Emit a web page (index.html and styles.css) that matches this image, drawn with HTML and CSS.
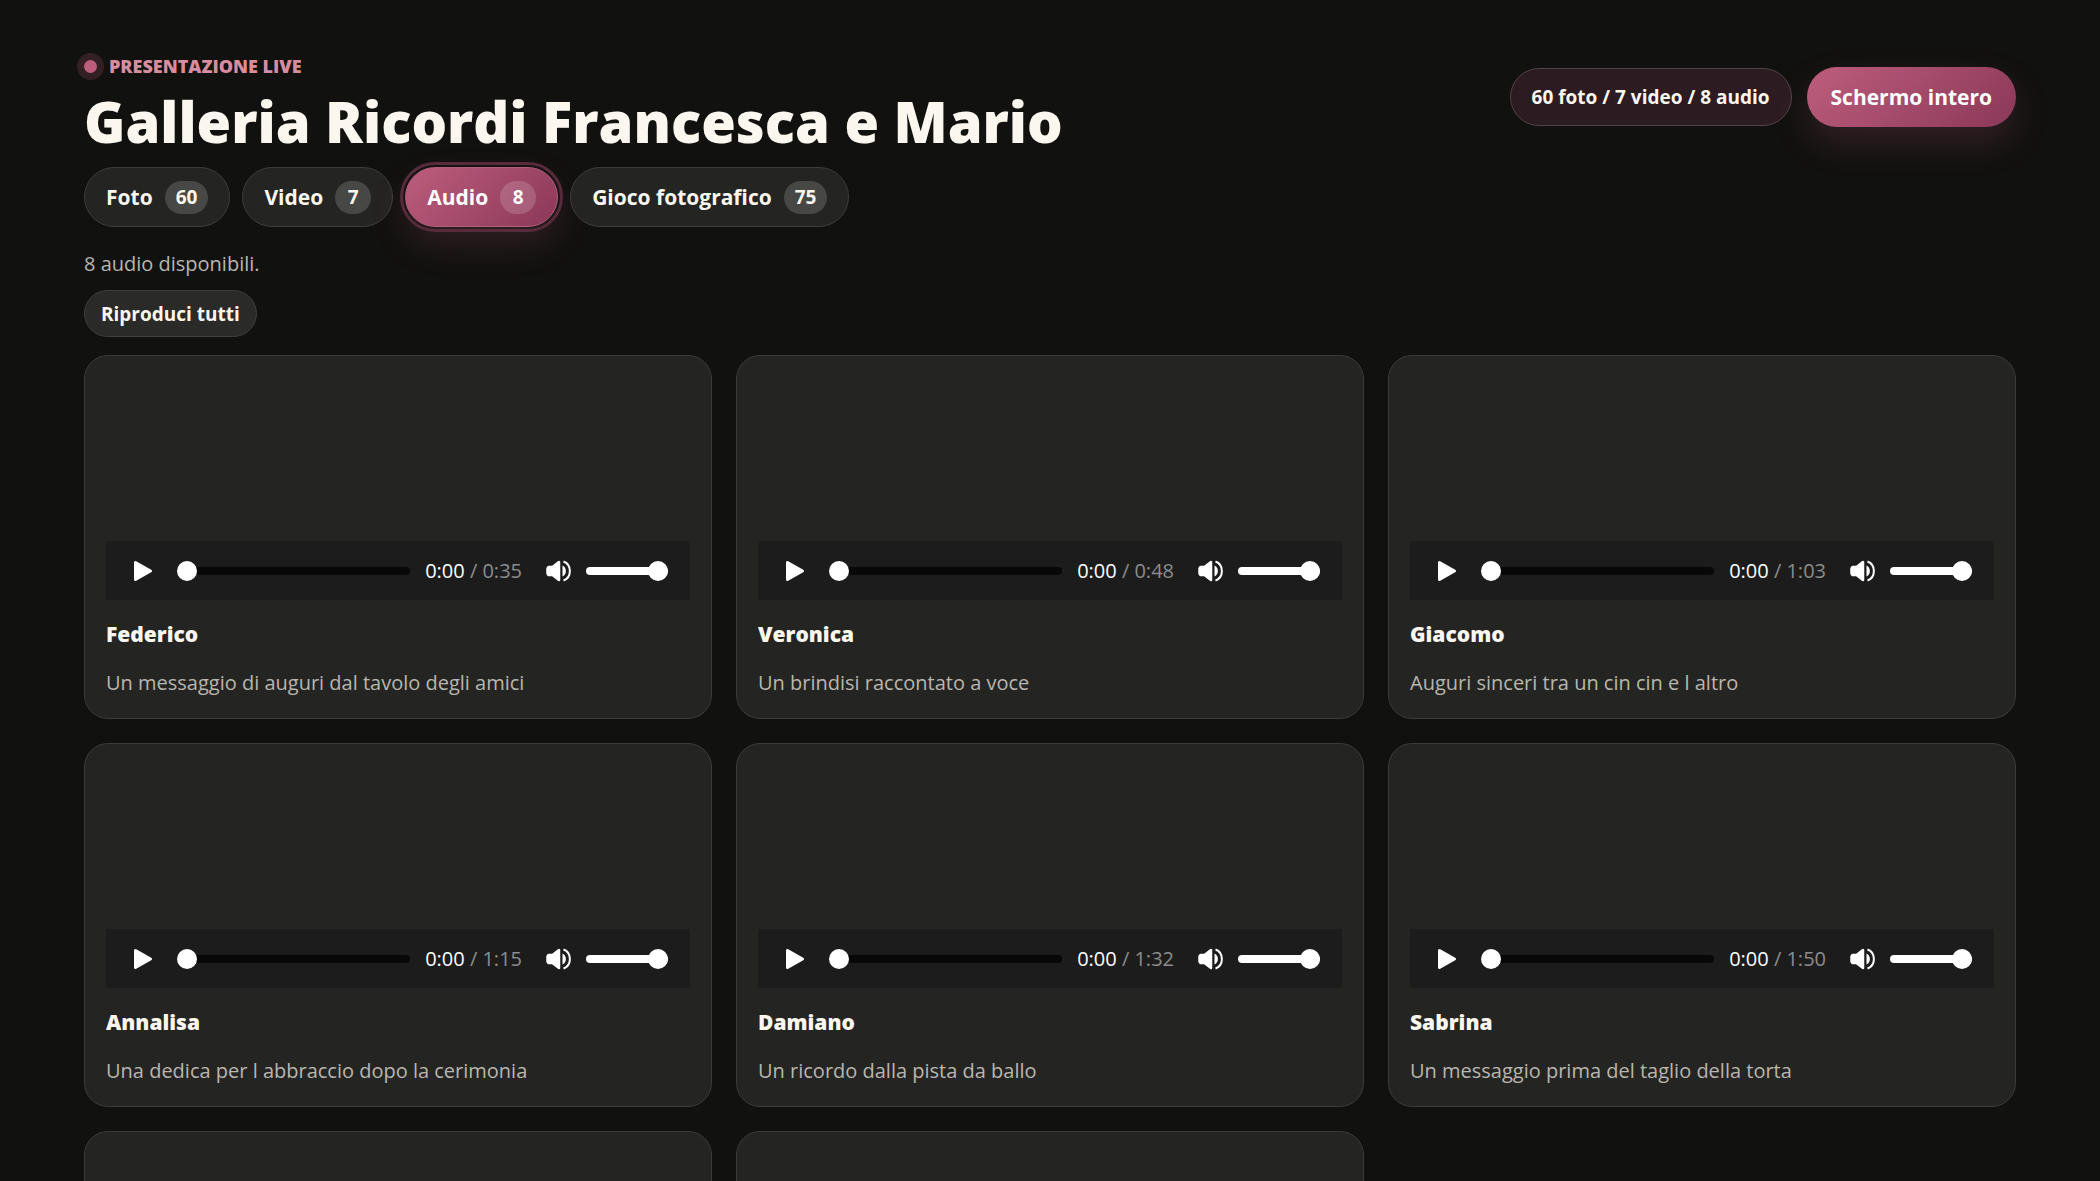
FILE: index.html
```html
<!DOCTYPE html>
<html lang="it">
<head>
    <meta charset="UTF-8">
    <meta name="viewport" content="width=device-width, initial-scale=1.0">
    <title>Galleria Ricordi Francesca e Mario</title>
    <link rel="stylesheet" href="styles.css">
</head>
<body>
    <main class="page">
        <header class="header">
            <div class="heading">
                <p class="eyebrow"><span class="live-dot"></span>Presentazione live</p>
                <h1>Galleria Ricordi Francesca e Mario</h1>
            </div>
            <div class="header-actions">
                <span class="summary">60 foto / 7 video / 8 audio</span>
                <button class="btn-fullscreen" type="button">Schermo intero</button>
            </div>
        </header>

        <nav class="tabs">
            <button class="tab" type="button">Foto <span class="count">60</span></button>
            <button class="tab" type="button">Video <span class="count">7</span></button>
            <button class="tab active" type="button">Audio <span class="count">8</span></button>
            <button class="tab" type="button">Gioco fotografico <span class="count">75</span></button>
        </nav>

        <p class="status">8 audio disponibili.</p>
        <button class="btn-play-all" type="button">Riproduci tutti</button>

        <section class="grid" id="grid"></section>
    </main>

    <script>
        const tracks = [
            { name: "Federico", time: "0:35", text: "Un messaggio di auguri dal tavolo degli amici" },
            { name: "Veronica", time: "0:48", text: "Un brindisi raccontato a voce" },
            { name: "Giacomo", time: "1:03", text: "Auguri sinceri tra un cin cin e l altro" },
            { name: "Annalisa", time: "1:15", text: "Una dedica per l abbraccio dopo la cerimonia" },
            { name: "Damiano", time: "1:32", text: "Un ricordo dalla pista da ballo" },
            { name: "Sabrina", time: "1:50", text: "Un messaggio prima del taglio della torta" }
        ];
        const total = 8;

        const player = track => `
            <div class="player">
                <button class="icon-btn play" type="button" aria-label="Riproduci">
                    <svg width="20" height="22" viewBox="0 0 20 22">
                        <path d="M2.5 2.5v17L17.5 11z" fill="#fff" stroke="#fff" stroke-width="3" stroke-linejoin="round"/>
                    </svg>
                </button>
                <input class="seek" type="range" min="0" max="100" value="0" aria-label="Posizione">
                <span class="time">0:00 <span class="total">/ ${track.time}</span></span>
                <button class="icon-btn" type="button" aria-label="Disattiva audio">
                    <svg width="25" height="22" viewBox="0 0 25 22">
                        <path d="M2.5 7h4L13 2v18l-6.5-5h-4L1.500 13.500v-5z" fill="#fff" stroke="#fff" stroke-width="2.500" stroke-linejoin="round"/>
                        <path d="M16.500 5.500c4.500 2 4.500 9 0 11z" fill="#fff"/>
                        <path d="M17.500 1.500c8.500 3 8.500 16 0 19" fill="none" stroke="#fff" stroke-width="2"/>
                    </svg>
                </button>
                <input class="volume" type="range" min="0" max="100" value="100" aria-label="Volume">
            </div>`;

        const cards = tracks.map(track => `
            <article class="card">
                <div class="media">${player(track)}</div>
                <h2>${track.name}</h2>
                <p>${track.text}</p>
            </article>
        `);

        while (cards.length < total) {
            cards.push('<article class="card"><div class="media"></div></article>');
        }

        document.getElementById("grid").innerHTML = cards.join("");
    </script>
</body>
</html>
```

FILE: styles.css
```css
* {
    box-sizing: border-box;
}
body {
    height: 100vh;
    margin: 0;
    overflow: hidden;
    background: #11110f;
    color: #fbf7ef;
    font-family: "Open Sans", "Noto Sans", sans-serif;
    font-size: 20px;
}
h1, h2, p {
    margin: 0;
}
button {
    font-family: inherit;
    color: inherit;
    cursor: pointer;
}
.page {
    width: 92%;
    margin: 0 auto;
    padding-top: 54px;
}
.header {
    display: flex;
    justify-content: space-between;
    align-items: flex-start;
    gap: 24px;
}
.eyebrow {
    display: flex;
    align-items: center;
    gap: 12px;
    color: #d88c9f;
    font-size: 18px;
    line-height: 24px;
    font-weight: 800;
    text-transform: uppercase;
}
.live-dot {
    width: 13px;
    height: 13px;
    border-radius: 50%;
    background: #bd5d7d;
    box-shadow: 0 0 0 7px rgba(189, 93, 125, 0.2);
}
h1 {
    margin-top: 11px;
    font-size: 56px;
    line-height: 64px;
    font-weight: 800;
}
.header-actions {
    display: flex;
    align-items: center;
    gap: 15px;
    padding-top: 13px;
}
.summary {
    padding: 0 21px;
    border: 1px solid #52424a;
    border-radius: 999px;
    background: #2c1c21;
    font-size: 19px;
    line-height: 56px;
    font-weight: 700;
}
.btn-fullscreen {
    height: 60px;
    padding: 0 24px;
    border: none;
    border-radius: 999px;
    background: linear-gradient(135deg, #bd5d7d, #8b3858);
    box-shadow: 0 16px 36px rgba(189, 93, 125, 0.2);
    color: #fff;
    font-size: 21px;
    font-weight: 700;
}
.tabs {
    display: flex;
    gap: 12px;
    margin-top: 14px;
}
.tab {
    display: flex;
    align-items: center;
    gap: 12px;
    height: 60px;
    padding: 0 21px;
    border: 1px solid #3d3d3b;
    border-radius: 999px;
    background: #242422;
    font-size: 21px;
    font-weight: 700;
}
.tab.active {
    border-color: #b05f7c;
    background: linear-gradient(135deg, #bd5d7d, #8b3858);
    box-shadow: 0 16px 36px rgba(189, 93, 125, 0.2);
    outline: 3px solid #572b3c;
    outline-offset: 2px;
    color: #fff;
}
.count {
    min-width: 36px;
    padding: 0 11px;
    border-radius: 999px;
    background: rgba(255, 255, 255, 0.16);
    font-size: 19px;
    line-height: 33px;
    text-align: center;
}
.status {
    margin-top: 22px;
    color: #b9b6af;
    line-height: 30px;
}
.btn-play-all {
    display: block;
    height: 47px;
    margin-top: 11px;
    padding: 0 16px;
    border: 1px solid #3f3f3d;
    border-radius: 999px;
    background: #2a2a28;
    font-size: 19px;
    font-weight: 700;
}
.grid {
    display: grid;
    grid-template-columns: repeat(3, 1fr);
    gap: 24px;
    margin-top: 18px;
}
.card {
    padding: 21px 21px 19px;
    border: 1px solid #3b3b39;
    border-radius: 24px;
    background: #242422;
}
.media {
    display: flex;
    align-items: flex-end;
    min-height: 223px;
}
.player {
    display: flex;
    align-items: center;
    width: 100%;
    height: 59px;
    padding: 0 22px 0 27px;
    background: #1c1c1c;
}
.icon-btn {
    display: flex;
    padding: 0;
    border: none;
    background: none;
}
.play {
    margin-right: 24px;
}
.seek, .volume {
    height: 20px;
    margin: 0;
    background: none;
    appearance: none;
}
.seek {
    flex: 1;
    min-width: 0;
}
.volume {
    width: 82px;
    margin-left: 15px;
}
.seek::-webkit-slider-runnable-track {
    height: 8px;
    border-radius: 4px;
    background: #080808;
}
.volume::-webkit-slider-runnable-track {
    height: 8px;
    border-radius: 4px;
    background: #fff;
}
.seek::-webkit-slider-thumb, .volume::-webkit-slider-thumb {
    width: 20px;
    height: 20px;
    margin-top: -6px;
    border-radius: 50%;
    background: #fff;
    appearance: none;
}
.time {
    margin: 0 24px 0 15px;
    color: #fff;
    white-space: nowrap;
}
.total {
    color: #8c8c8c;
}
.card h2 {
    margin-top: 18px;
    font-size: 21px;
    line-height: 33px;
    font-weight: 800;
}
.card p {
    margin-top: 15px;
    color: #b9b6af;
    line-height: 33px;
}
```
